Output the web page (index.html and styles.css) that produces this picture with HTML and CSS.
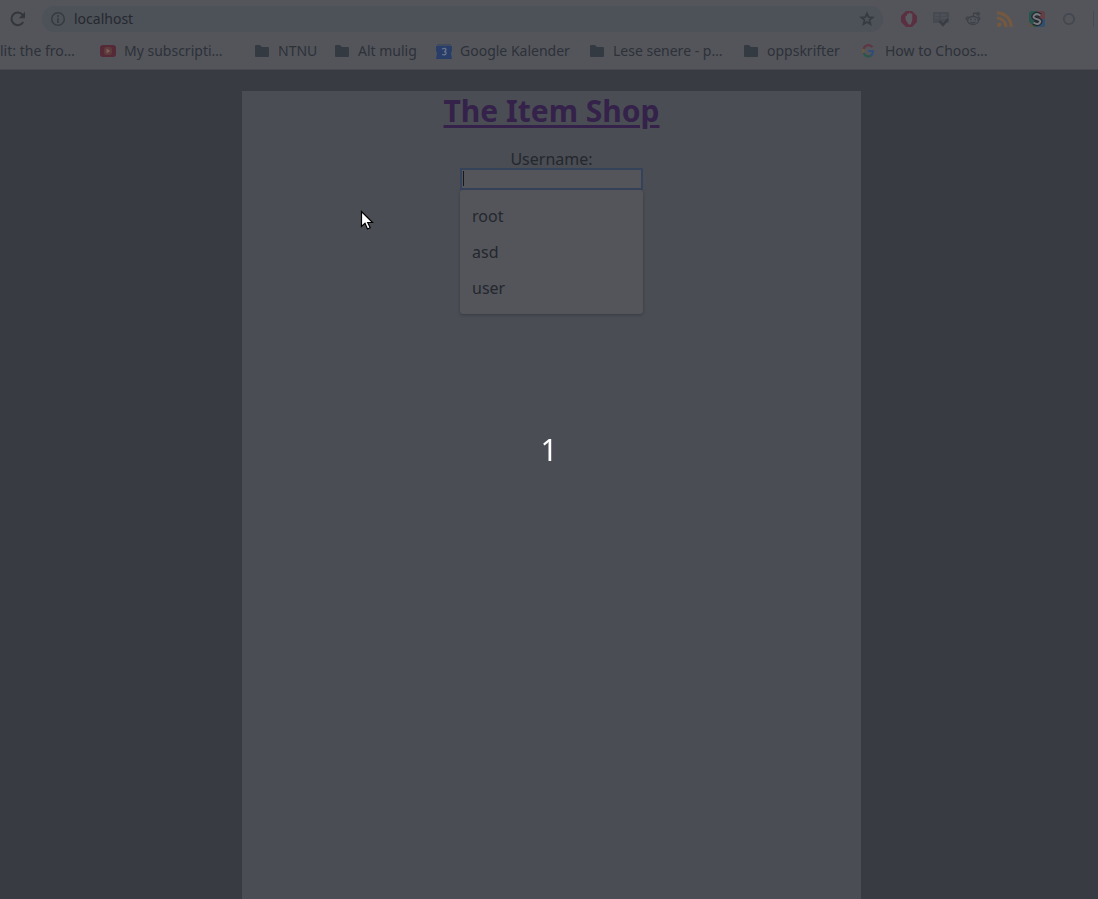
FILE: index.html
```html
<!DOCTYPE html>
<html lang="en">
<head>
<meta charset="utf-8">
<title>The Item Shop</title>
<link rel="stylesheet" href="styles.css">
</head>
<body>
<header class="chrome">
  <div class="toolbar">
    <button class="icon-button" aria-label="Reload"><svg width="16" height="16" viewBox="0 0 16 16"><path d="M13.200 11A6.300 6.300 0 1 1 12.600 3.800" fill="none" stroke="#33373d" stroke-width="2"/><path d="M15 .8v6.400H8.800z" fill="#33373d"/></svg></button>
    <div class="address">
      <svg width="16" height="16" viewBox="0 0 16 16"><circle cx="8" cy="8" r="6.300" fill="none" stroke="#363b42" stroke-width="1.500"/><path d="M8 7v5M8 4v2" stroke="#363b42" stroke-width="1.700"/></svg>
      <input class="address-input" type="text" value="localhost" aria-label="Address">
      <button class="icon-button" aria-label="Bookmark this page"><svg width="16" height="16" viewBox="0 0 16 16"><path d="M8 2.500l1.600 3.700 4 .3-3.100 2.600 1 4L8 11l-3.500 2.100 1-4-3.100-2.600 4-.3z" fill="none" stroke="#363a41" stroke-width="1.700"/></svg></button>
    </div>
    <div class="extensions">
      <button class="icon-button" aria-label="Ad blocker"><svg width="16" height="16" viewBox="0 0 16 16"><path d="M5 0h6l5 5v6l-5 5H5l-5-5V5z" fill="#5a2f3f"/><path d="M4.500 8.500V5q.8-1 1.500 0V3q.8-1.200 1.700 0V2q1-1 1.800 0v1q1-1 1.800 0v6l-1.500 4.500H7.500z" fill="#5a5b61"/></svg></button>
      <button class="icon-button" aria-label="Page checker"><svg width="16" height="16" viewBox="0 0 16 16"><path d="M0 1h16v11H0z" fill="#474a50"/><path d="M2 4h4M2 7h3M8 4h5M8 7h6" stroke="#55585e"/><path d="M6.500 10l3.500 4 5-6" fill="none" stroke="#393c42" stroke-width="2.200"/></svg></button>
      <button class="icon-button" aria-label="Reddit"><svg width="16" height="16" viewBox="0 0 16 16" fill="none" stroke="#3d4148" stroke-width="1.300"><ellipse cx="8" cy="9.500" rx="5.500" ry="4"/><path d="M8 5.500l1-3.500 3 .5M2.600 9Q.5 8.500 1.300 7T4 6.500M13.400 9q2-.5 1.300-2T12 6.500M5.500 11q2.500 1.500 5 0"/><circle cx="13.200" cy="2.800" r="1.200"/><path d="M5 8.500h1.500M9.500 8.500H11" stroke-width="1.600"/></svg></button>
      <button class="icon-button" aria-label="Feeds"><svg width="16" height="16" viewBox="0 0 16 16"><circle cx="2.300" cy="13.700" r="2.300" fill="#74583f"/><path d="M0 7A9 9 0 0 1 9 16M0 1.800A14.200 14.200 0 0 1 14.200 16" fill="none" stroke="#74583f" stroke-width="3.200"/></svg></button>
      <button class="icon-button" aria-label="Session tool"><svg width="16" height="16" viewBox="0 0 16 16"><rect width="16" height="16" rx="3" fill="#285450"/><path d="M8 0h5q3 0 3 3v5H8z" fill="#663f46"/><path d="M8 8h8v5q0 3-3 3H8z" fill="#30506f"/><path d="M0 11l5 5H3q-3 0-3-3z" fill="#67523f"/><path d="M11.500 4.500Q8 2 5.500 4t1 3.600l3 1Q12.500 10 10.500 12T4.500 11.500" fill="none" stroke="#25282e" stroke-width="4.500"/><path d="M11.500 4.500Q8 2 5.500 4t1 3.600l3 1Q12.500 10 10.500 12T4.500 11.500" fill="none" stroke="#777b80" stroke-width="2"/></svg></button>
      <button class="icon-button" aria-label="Status"><svg width="16" height="16" viewBox="0 0 16 16"><circle cx="8" cy="8" r="5.200" fill="none" stroke="#43474e" stroke-width="1.700"/></svg></button>
    </div>
    <span class="divider"></span>
  </div>
  <nav class="bookmarks" aria-label="Bookmarks">
    <a href="#">lit: the fro…</a>
    <a href="#"><svg width="16" height="16" viewBox="0 0 16 16"><rect y="2" width="16" height="12" rx="3" fill="#552936"/><rect x="4" y="4" width="8" height="8" rx="2" fill="#5e3a3a"/><path d="M6.500 5.500L10.500 8l-4 2.500z" fill="#77605f"/></svg>My subscripti…</a>
    <a href="#"><svg width="16" height="16" viewBox="0 0 16 16"><path d="M1 3q0-1 1-1h4l2 2h6q1 0 1 1v8q0 1-1 1H2q-1 0-1-1z" fill="#343a42"/></svg>NTNU</a>
    <a href="#"><svg width="16" height="16" viewBox="0 0 16 16"><path d="M1 3q0-1 1-1h4l2 2h6q1 0 1 1v8q0 1-1 1H2q-1 0-1-1z" fill="#343a42"/></svg>Alt mulig</a>
    <a href="#"><svg width="16" height="16" viewBox="0 0 16 16"><path d="M1 1h14v3H1z" fill="#414b5e"/><path d="M0 3h16v5l-1 2 1 6H0l1-6-1-2z" fill="#283e68"/><path d="M6 6q4-1.500 4 1 0 1.500-2 1.500 2.300 0 2 2-.5 2-4 1" fill="none" stroke="#69748a" stroke-width="1.300"/></svg>Google Kalender</a>
    <a href="#"><svg width="16" height="16" viewBox="0 0 16 16"><path d="M1 3q0-1 1-1h4l2 2h6q1 0 1 1v8q0 1-1 1H2q-1 0-1-1z" fill="#343a42"/></svg>Lese senere - p…</a>
    <a href="#"><svg width="16" height="16" viewBox="0 0 16 16"><path d="M1 3q0-1 1-1h4l2 2h6q1 0 1 1v8q0 1-1 1H2q-1 0-1-1z" fill="#343a42"/></svg>oppskrifter</a>
    <a href="#"><svg width="16" height="16" viewBox="0 0 16 16" fill="none" stroke-width="2.200"><path d="M11.500 4.200A5 5 0 0 0 2.600 6" stroke="#603642"/><path d="M2.600 6a5 5 0 0 0 0 4" stroke="#6a5a3e"/><path d="M2.600 10a5 5 0 0 0 7.700 2.300" stroke="#2c5549"/><path d="M10.300 12.300A5 5 0 0 0 12 8H7.500" stroke="#314c79"/></svg>How to Choos…</a>
  </nav>
</header>
<main class="page">
  <section class="shop">
    <h1 class="title"><a href="#">The Item Shop</a></h1>
    <form class="login">
      <label for="username">Username:</label>
      <div class="field">
        <input class="username" id="username" type="text" autocomplete="off">
        <span class="caret"></span>
        <ul class="suggestions">
          <li>root</li>
          <li>asd</li>
          <li>user</li>
        </ul>
      </div>
    </form>
  </section>
</main>
<div class="countdown">1</div>
<svg class="pointer" width="14" height="21" viewBox="0 0 14 21"><path d="M1.500 1.500v15l3.500-3.200 2.500 5.700 2.700-1.200-2.500-5.300h4.800z" fill="#fff" stroke="#000" stroke-width="1.200"/></svg>
</body>
</html>
```
FILE: styles.css
```css
* {
  box-sizing: border-box;
}

body {
  margin: 0;
  min-height: 100vh;
  display: flex;
  flex-direction: column;
  background: #383b42;
  color: #24272d;
  font: 16px/20px "Noto Sans", "Open Sans", sans-serif;
}

a {
  color: inherit;
  text-decoration: none;
}

svg {
  display: block;
  flex: none;
}

.chrome {
  height: 70px;
  background: #53555b;
  border-bottom: 1px solid #484a50;
}

.toolbar {
  display: flex;
  align-items: center;
  height: 38px;
  padding-left: 10px;
}

.icon-button {
  padding: 0;
  border: 0;
  background: none;
}

.address {
  flex: 1;
  display: flex;
  align-items: center;
  gap: 8px;
  height: 26px;
  margin-left: 16px;
  padding: 0 8px;
  border-radius: 13px;
  background: #4d5158;
}

.address-input {
  flex: 1;
  min-width: 0;
  padding: 0;
  border: 0;
  outline: 0;
  background: none;
  color: #25292f;
  font: inherit;
  font-size: 14px;
}

.extensions {
  display: flex;
  gap: 16px;
  margin-left: 18px;
}

.divider {
  width: 1px;
  height: 16px;
  margin: 0 4px 0 16px;
  background: #484b52;
}

.bookmarks {
  display: grid;
  grid-template-columns: 100px 154px 80px 102px 153px 154px 118px auto;
  height: 26px;
  font-size: 14px;
  color: #2d3138;
  overflow: hidden;
}

.bookmarks a {
  display: flex;
  align-items: center;
  gap: 8px;
  white-space: nowrap;
}

.page {
  flex: 1;
  display: flex;
  justify-content: center;
  padding: 21px 0 0 5px;
}

.shop {
  width: 619px;
  max-width: 100%;
  background: #4a4d54;
  text-align: center;
}

.title {
  margin: 0 0 20px;
  font-size: 30px;
  line-height: 39px;
  color: #34224a;
}

.title a {
  text-decoration: underline;
  text-decoration-thickness: 3px;
  text-underline-offset: 3px;
}

.login {
  display: flex;
  flex-direction: column;
  align-items: center;
}

.login label {
  line-height: 18px;
}

.field {
  position: relative;
  width: 183px;
}

.username {
  display: block;
  width: 100%;
  height: 22px;
  padding: 2px;
  border: 2px solid #34425a;
  outline: 0;
  background: #53555b;
  color: inherit;
  font: inherit;
}

.caret {
  position: absolute;
  top: 3px;
  left: 3px;
  width: 1px;
  height: 15px;
  background: #15181d;
}

.suggestions {
  position: absolute;
  top: 100%;
  left: 0;
  width: 100%;
  margin: 0;
  padding: 8px 0;
  list-style: none;
  text-align: left;
  background: #53555b;
  border-radius: 3px;
  box-shadow: 0 1px 3px #383b42;
}

.suggestions li {
  padding: 8px 12px;
}

.countdown {
  position: fixed;
  inset: 0;
  display: grid;
  place-items: center;
  color: #fff;
  font-size: 30px;
  pointer-events: none;
}

.pointer {
  position: absolute;
  top: 210px;
  left: 360px;
}
```
